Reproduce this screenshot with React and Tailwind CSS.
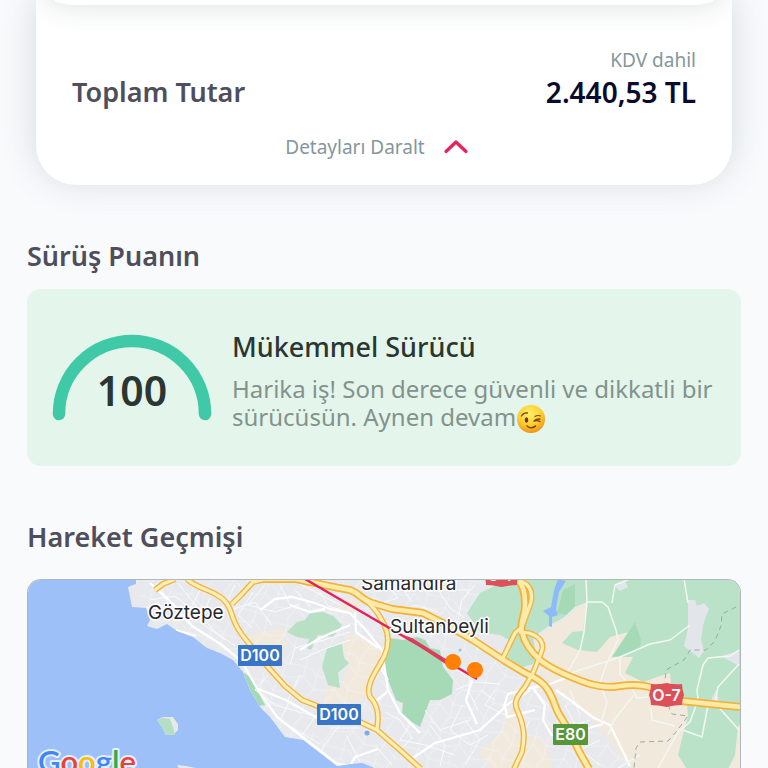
import React from "react";

const SECTION_TITLE = "text-[27px] leading-8 font-semibold text-[#4f4e5b]";

function ChevronUp() {
  return (
    <svg width="26" height="18" viewBox="0 0 26 18" fill="none" aria-hidden="true">
      <path d="M3 13.500 L13 4 L23 13.500" stroke="#ea2159" strokeWidth="3.200" strokeLinecap="round" strokeLinejoin="round" />
    </svg>
  );
}

function TotalCard() {
  return (
    <section className="mx-9 rounded-b-[40px] bg-white shadow-[0_-4px_34px_rgba(95,110,108,0.22)]">
      <div className="h-10 overflow-hidden">
        <div className="-mt-9 h-[41px] rounded-b-[36px] bg-white shadow-[0_4px_26px_rgba(90,100,105,0.16)]" />
      </div>
      <div className="flex items-end justify-between px-9 pt-2">
        <h2 className={SECTION_TITLE}>Toplam Tutar</h2>
        <div className="text-right">
          <p className="text-[19px] leading-6 text-[#84979c]">KDV dahil</p>
          <p className="pt-1 text-[28px] leading-8 font-semibold text-[#080b2c]">2.440,53 TL</p>
        </div>
      </div>
      <div className="flex justify-center pt-[25px] pr-[14px] pb-6">
        <button type="button" className="flex items-center gap-[18px] text-[19px] leading-7 text-[#84979c]">
          Detayları Daralt
          <ChevronUp />
        </button>
      </div>
    </section>
  );
}

function Gauge() {
  return (
    <div className="relative h-[92px] w-[160px] shrink-0">
      <svg className="block" width="160" height="92" viewBox="0 0 160 92" fill="none" aria-hidden="true">
        <path d="M7 80 A73 73 0 0 1 153 80" stroke="#40c9a6" strokeWidth="12.500" strokeLinecap="round" />
      </svg>
      <span className="absolute inset-x-0 top-[34px] text-center text-[41px] leading-[44px] font-semibold text-[#2b3632]">100</span>
    </div>
  );
}

function WinkFace() {
  return (
    <svg className="-my-2 inline-block align-middle" width="30" height="30" viewBox="0 0 30 30" role="img" aria-label="😉">
      <defs>
        <radialGradient id="face" cx="0.45" cy="0.3" r="0.72">
          <stop offset="0" stopColor="#fff06a" />
          <stop offset="0.6" stopColor="#fecb2e" />
          <stop offset="1" stopColor="#f08d15" />
        </radialGradient>
      </defs>
      <circle cx="15" cy="14" r="14" fill="url(#face)" />
      <ellipse cx="10.500" cy="15" rx="1.800" ry="2.700" fill="#6b3c0c" />
      <path d="M5.500 11 Q7.500 7.500 11.500 8" fill="none" stroke="#7a460d" strokeWidth="1.300" strokeLinecap="round" />
      <path d="M19 11.500 Q21.500 9.800 24.500 11" fill="none" stroke="#7a460d" strokeWidth="1.200" strokeLinecap="round" />
      <path d="M24 14 Q20 13.800 18 16 Q21 15 24 16.500" fill="none" stroke="#7a460d" strokeWidth="1.400" strokeLinecap="round" strokeLinejoin="round" />
      <path d="M11 21 Q15 24.500 19.500 21" fill="none" stroke="#7a460d" strokeWidth="1.600" strokeLinecap="round" />
    </svg>
  );
}

function ScoreCard() {
  return (
    <div className="flex items-center rounded-[14px] bg-[#e4f5ec] px-[25px] pt-10 pb-[35px]">
      <Gauge />
      <div className="min-w-0 flex-1 pl-5">
        <h3 className="text-[27px] leading-9 font-medium text-[#2b3632]">Mükemmel Sürücü</h3>
        <p className="-mr-4 pt-[10px] text-[24px] leading-7 text-[#83938c]">
          Harika iş! Son derece güvenli ve dikkatli bir sürücüsün. Aynen devam
          <WinkFace />
        </p>
      </div>
    </div>
  );
}

const LAND =
  "M136 579 L136 584 L128 587 L130 597 L132 607 L146 608 L150 620 L147 626 L157 629 L167 624 L177 631 L193 637 L207 648 L220 653 L233 660 L243 672 L250 690 L260 707 L270 717 L285 737 L303 740 L320 753 L337 766 L350 764 L362 763 L380 770 L742 770 L742 579 Z";

const BEIGE = [
  "M533 640 L560 622 L590 600 L660 600 L741 640 V769 H632 L607 738 L590 718 L562 694 L545 677 L532 664 Z",
  "M490 768 L478 752 L500 736 L512 706 L524 735 L546 740 L552 768 Z",
  "M350 634 L366 638 L385 652 L367 690 L370 700 L322 706 L326 686 L341 688 L349 663 L342 646 Z",
  "M252 634 L283 627 L286 646 L264 652 L244 642 Z",
  "M344 596 L362 604 L356 613 L338 608 Z",
];

const GREEN =
  "M467 613 L480 593 L500 583 L505 579 H742 V722 L738 727 L735 755 L728 769 H687 L678 755 L684 730 L688 717 L687 703 L672 693 L670 673 L660 676 L643 682 L625 673 L633 657 L612 657 L628 632 L610 637 L597 652 L578 650 L562 643 L572 632 L583 631 L587 602 L575 607 L563 618 L550 625 L533 637 L536 655 L533 664 L523 667 L507 658 L513 642 L500 635 L480 632 Z";

const PARKS = [
  "M287 632 L297 622 L305 620 L310 613 L323 612 L333 616 L342 625 L333 637 L318 635 L311 650 L306 648 L309 639 L297 637 Z",
  "M327 648 L342 644 L344 658 L349 663 L338 673 L340 688 L328 685 L322 667 Z",
];

const DARK_PARKS = [
  "M390 638 L403 640 L417 637 L425 640 L430 648 L440 650 L443 667 L453 680 L452 694 L440 700 L430 700 L420 727 L412 722 L402 713 L403 703 L396 700 L392 690 L383 667 Z",
  "M563 590 L575 584 V606 L566 615 L557 613 Z",
  "M612 657 L624 639 L635 622 L641 640 L640 648 L627 655 Z",
  "M243 672 L251 678 L265 705 L259 706 L250 690 Z",
];

const MINOR_ROADS =
  "M150 600 L175 596 L190 608 L215 612 M160 585 L168 603 L190 625 M178 583 L196 606 L212 629 L235 646 M200 590 L190 610 M210 598 L200 622 L225 640 M235 585 L226 603 M253 592 L238 615 L252 628 M265 585 L248 605 L275 612 L300 604 M280 585 L290 605 L310 612 M230 610 L255 602 L272 625 M295 590 L310 606 M300 584 L340 605 M320 592 L328 606 L345 611 M268 675 L255 690 L275 705 L310 715 M290 700 L280 720 L320 744 M300 675 L288 700 M320 710 L300 738 M340 724 L320 752 M360 728 L330 728 M346 735 L360 762 M300 660 L322 650 L350 640 M290 665 L295 648 L317 642 L350 632 M400 615 L415 605 L438 612 M435 585 L450 608 L465 618 M475 585 L462 600 L458 620 M440 590 L470 590 M400 585 L412 602 M385 582 L398 598 L384 602 M450 668 L470 675 L468 690 L478 710 M455 690 L475 682 L500 684 M462 705 L450 730 L470 745 L488 735 M430 725 L445 745 L440 766 M425 710 L440 730 L470 720 M410 725 L400 740 L425 745 L455 755 M385 712 L400 720 L412 738 L400 750 M375 745 L392 765 M465 720 L480 740 L465 765 M495 690 L485 705 L505 715 M480 690 L495 700 M530 720 L520 740 M570 690 L580 715 M590 720 L575 725 L565 705 M548 705 L535 690 M600 740 L580 750 L600 765";

const LOCAL_ROADS =
  "M150 583 L172 603 L192 626 L222 645 L242 662 L258 690 L277 717 L300 735 L337 764 L365 768 M176 630 L196 636 M260 610 L275 599 L292 597 L315 603 L330 609 L350 613 L364 628 L382 650 L388 690 L400 713 L420 733 M290 605 L310 612 L325 609 M256 688 L286 700 L326 723 M350 625 L320 638 L300 650 M355 612 L356 632 L378 648 M385 645 L382 670 L388 680 M378 749 L355 757 L350 766 M376 701 L387 692 M472 680 L466 700 L477 724 M410 760 L435 743 L480 730 L503 709 L508 694 L530 688 L550 684 L566 678 M533 688 L545 705 L543 720 L552 736 M530 690 L505 706 L507 717 L535 710 M556 690 L570 700 L594 718 L610 725 L630 766 M570 733 L603 724";

const COUNTRY_ROADS =
  "M586 579 L587 602 L584 632 L580 650 L570 668 L562 678 M587 602 L602 602 L608 607 L616 630 L618 640 L606 665 L600 683 L607 702 L600 727 M612 603 L615 585 L630 579 M565 675 L620 657 L650 644 L670 640 L690 625 M620 657 L620 674 L631 687 L637 698 L648 697 M651 708 L652 720 L675 726 M633 696 L614 720 L608 735 M684 579 L688 603 M708 658 L703 665 L697 690 L698 700 L690 722 L678 732 L658 768 M708 658 L730 656 L739 650 M739 664 L718 687 L715 703 L739 730 M708 705 L702 737 L683 730 M618 768 L640 755";

const HIGHWAYS = [
  "M187 579 C195 587 207 589 217 595 C226 600 229 605 233 618 C238 632 244 637 250 645 L268 667 L285 686 L302 700 L320 707 L360 722 L377 730 L400 750 L421 769",
  "M367 601 C378 612 383 620 387 632 C390 645 386 655 380 664 C372 677 366 688 370 697 C378 705 379 715 377 729",
  "M155 590 L163 584 L175 579",
  "M232 604 L242 594 L253 582 L262 580",
  "M520 581 C529 584 533 591 531 602 L522 627 L515 633 L503 658",
  "M519 632 L529 633 C541 637 545 644 541 653 L533 673 L525 687 C516 698 513 703 518 712 C526 730 524 742 522 752 L514 769",
];

const MOTORWAYS = [
  "M250 579 H296 C315 583 337 588 350 590 C361 594 361 600 372 603 L392 609 L423 613 L447 625 L473 640 L505 661 L525 673 C538 679 544 683 548 690 C555 701 555 710 562 719 L570 733 L580 753 L589 769",
  "M517 579 C524 586 525 594 525 603 C526 615 519 623 522 632 C524 641 530 651 540 660 C550 668 570 677 587 683 C600 687 610 688 620 686 C635 684 650 685 660 692 L682 701 L741 707",
];

function Shield({ x, y, w, color, label }) {
  return (
    <g>
      <rect x={x} y={y} width={w} height="21" rx="1" fill={color} />
      <text x={x + w / 2} y={y + 16} textAnchor="middle" fontSize="16" fontWeight="600" fill="#fff">
        {label}
      </text>
    </g>
  );
}

function RedShield({ x, y }) {
  return (
    <g transform={`translate(${x} ${y})`}>
      <path d="M2 1 Q9 2 17.500 0 Q26 2 33 1 Q33 6 35 12 Q33 17 33 22 Q26 22 17.500 24 Q9 22 2 22 Q2 17 0 12 Q2 6 2 1 Z" fill="#dc5059" />
      <text x="17.500" y="18" textAnchor="middle" fontSize="16" fontWeight="600" fill="#fff">
        O-7
      </text>
    </g>
  );
}

function PlaceName({ x, y, children }) {
  return (
    <text x={x} y={y} fontSize="19" fill="#26282c" stroke="#fff" strokeWidth="3" strokeLinejoin="round" paintOrder="stroke">
      {children}
    </text>
  );
}

function RouteMap() {
  return (
    <svg
      className="block h-full w-full font-[family-name:Inter,Roboto,sans-serif]"
      viewBox="28 580 712 188"
      preserveAspectRatio="xMinYMin slice"
      role="img"
      aria-label="Hareket Geçmişi"
    >
      <defs>
        <clipPath id="land">
          <path d={LAND} />
        </clipPath>
        <pattern id="streets" width="34" height="30" patternUnits="userSpaceOnUse" patternTransform="rotate(24)">
          <path d="M0 6 L13 4 L20 9 L34 6 M6 0 L8 14 L4 30 M20 9 L23 22 L20 30 M20 0 V9 M8 14 L23 22 L34 19 M0 19 L8 14" fill="none" stroke="#f3f4f6" strokeWidth="0.700" />
        </pattern>
      </defs>
      <rect x="27" y="579" width="715" height="400" fill="#9dc0f9" />
      <path d={LAND} fill="#e7e9ec" />
      <g clipPath="url(#land)">
        {BEIGE.map((d) => (
          <path key={d} d={d} fill="#f0e9dc" />
        ))}
        <path d="M128 579 H500 L470 610 L500 650 L560 690 L605 738 L632 768 H250 Z" fill="url(#streets)" />
        <path d={GREEN} fill="#bae2c8" />
        {PARKS.map((d) => (
          <path key={d} d={d} fill="#b8e0c5" />
        ))}
        {DARK_PARKS.map((d) => (
          <path key={d} d={d} fill="#a6dab7" />
        ))}
        <path d="M688 600 L695 600 L697 606 L704 603 L709 609 L704 622 L701 639 L704 651 L699 658 L684 646 L688 628 Z M721 656 L739 651 V666 Z M716 690 L719 700 L714 705 L712 698 Z M615 586 L625 581 L628 587 L620 591 Z" fill="#e2e5e9" />
        <path d="M558 579 L566 581 L559 592 L556 609 L558 615 L552 617 L552 627 L549 626 L549 616 L543 611 L551 607 L554 590 Z" fill="#8fbaf9" />
        <path d={MINOR_ROADS} fill="none" stroke="#f9fafb" strokeWidth="1" />
        <path d={LOCAL_ROADS} fill="none" stroke="#fff" strokeWidth="2.300" strokeLinejoin="round" />
        <path d={COUNTRY_ROADS} fill="none" stroke="#f3f8f2" strokeWidth="1.500" strokeLinejoin="round" />
        <path d="M736 607 L722 614 L721 626 L715 641 L706 650 L690 650 L684 660 L666 670 L665 682 M668 705 L672 714 L688 716 L676 732 L668 741 L640 742 L636 748 L634 768" fill="none" stroke="#9eaaa2" strokeWidth="1" strokeDasharray="5 4" />
      </g>
      <path d="M157 720 L163 717 L173 717 L178 724 L178 730 L173 735 H166 L162 727 Z" fill="#e6e8e9" />
      <path d="M157 720 L163 718 L170 719 L173 727 L175 735 H166 L162 727 Z" fill="#b4dfc6" />
      <path d="M177 765 L186 766 L196 768 V770 H180 Z" fill="#e6e8e9" />

      {HIGHWAYS.map((d) => (
        <path key={d} d={d} fill="none" stroke="#f2b544" strokeWidth="6" strokeLinejoin="round" />
      ))}
      {MOTORWAYS.map((d) => (
        <path key={d} d={d} fill="none" stroke="#f2b138" strokeWidth="8" strokeLinejoin="round" />
      ))}
      {HIGHWAYS.map((d) => (
        <path key={d} d={d} fill="none" stroke="#fdeeb4" strokeWidth="3.200" strokeLinejoin="round" />
      ))}
      {MOTORWAYS.map((d) => (
        <path key={d} d={d} fill="none" stroke="#fdeaa6" strokeWidth="4.600" strokeLinejoin="round" />
      ))}

      <circle cx="367" cy="733" r="2.500" fill="#7fa9ee" />
      <circle cx="460" cy="650" r="1.500" fill="#9dbdf3" />

      <path d="M305 579 L477 679" stroke="#e4205c" strokeWidth="2.400" />
      <path d="M400 634 L412 638 L449 661 L447 665 Z" fill="#dd3d5d" />
      <PlaceName x={148} y={619}>Göztepe</PlaceName>
      <PlaceName x={361} y={590}>Samandıra</PlaceName>
      <PlaceName x={390} y={633}>Sultanbeyli</PlaceName>
      <circle cx="453" cy="662" r="8" fill="#ff8002" />
      <circle cx="475" cy="670" r="8" fill="#ff8002" />

      <Shield x={238} y={645} w={44} color="#3975c6" label="D100" />
      <Shield x={317} y={704} w={44} color="#3975c6" label="D100" />
      <Shield x={553} y={724} w={35} color="#58963a" label="E80" />
      <RedShield x={649} y={683} />
      <RedShield x={484} y={563} />

      <text x="38" y="773" fontSize="31" fontWeight="600" className="font-[family-name:Lato,sans-serif]" stroke="#e6effc" strokeWidth="4" strokeLinejoin="round" paintOrder="stroke">
        <tspan fill="#4285f4">G</tspan>
        <tspan fill="#ea4335">o</tspan>
        <tspan fill="#fbbc05">o</tspan>
        <tspan fill="#4285f4">g</tspan>
        <tspan fill="#34a853">l</tspan>
        <tspan fill="#ea4335">e</tspan>
      </text>
    </svg>
  );
}

export default function App() {
  return (
    <main className="flex h-screen flex-col overflow-hidden bg-[#f8fafc] font-['Noto_Sans','Open_Sans',sans-serif]">
      <TotalCard />
      <section className="px-[27px] pt-[55px]">
        <h2 className={SECTION_TITLE}>Sürüş Puanın</h2>
        <div className="pt-[17px]">
          <ScoreCard />
        </div>
      </section>
      <section className="flex min-h-0 flex-1 flex-col px-[27px] pt-[55px]">
        <h2 className={SECTION_TITLE}>Hareket Geçmişi</h2>
        <div className="mt-[26px] min-h-0 flex-1 overflow-hidden rounded-t-[14px] border border-b-0 border-[#b3b6b8]">
          <RouteMap />
        </div>
      </section>
    </main>
  );
}
